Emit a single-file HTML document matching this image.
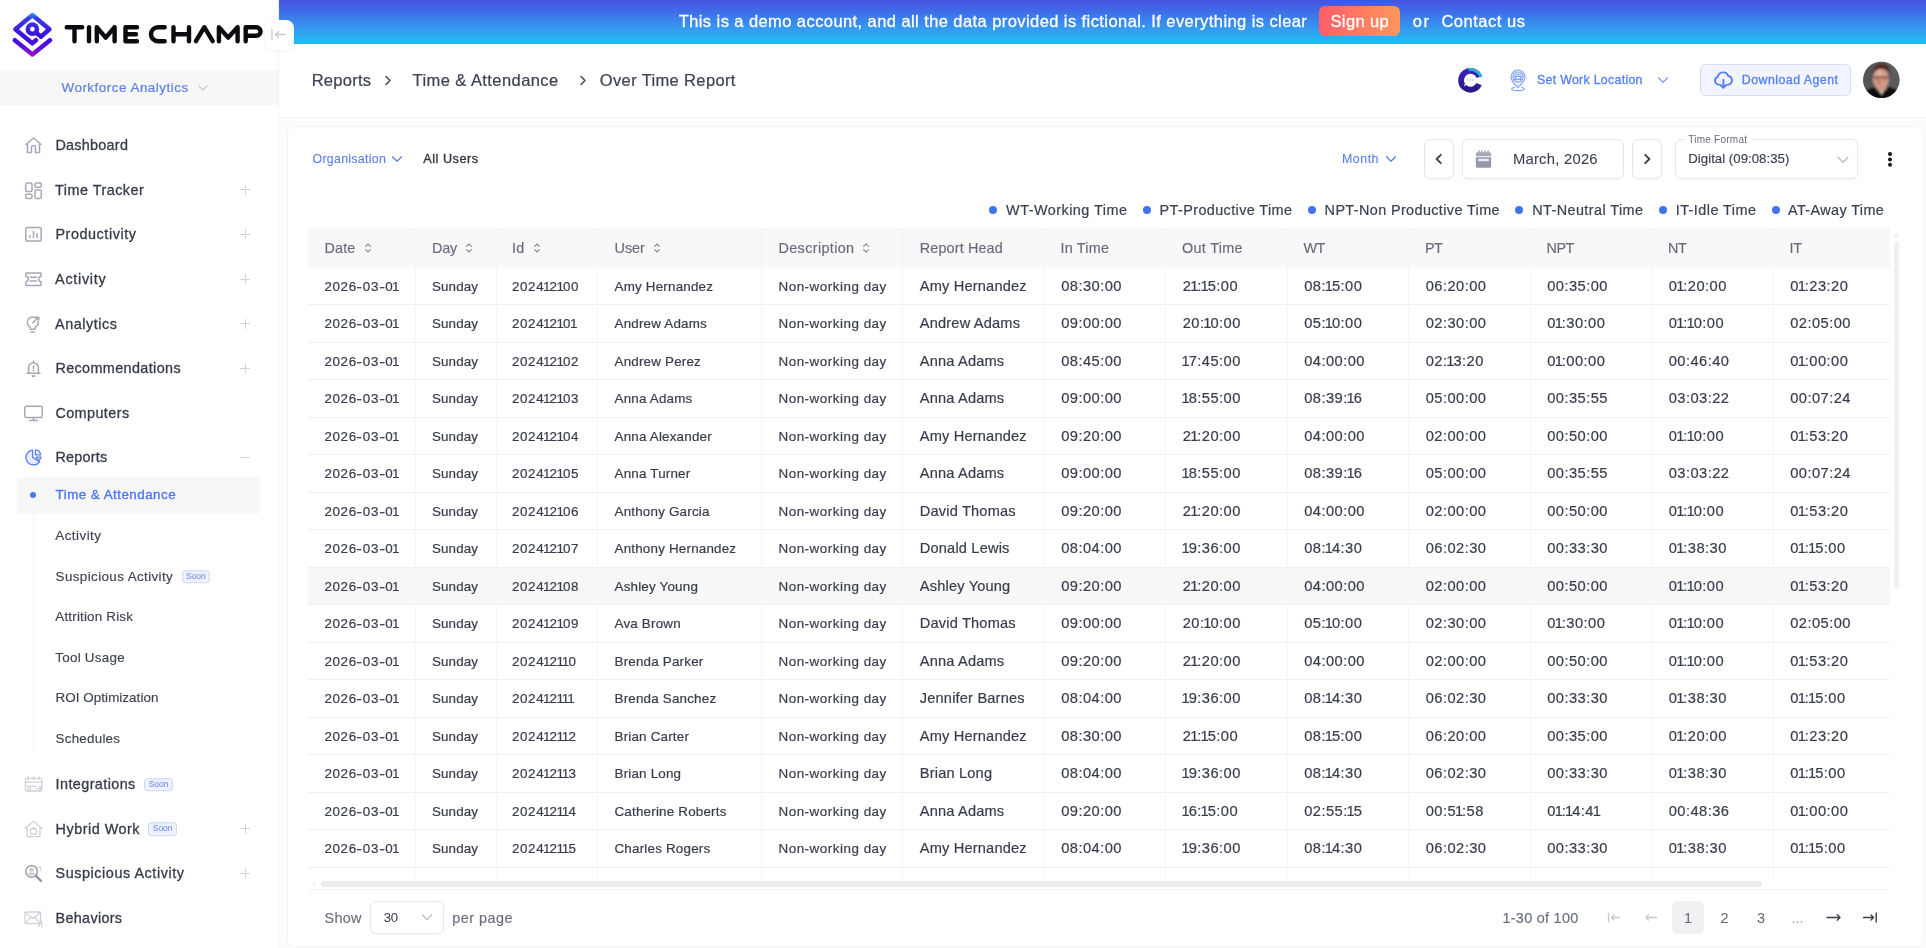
<!DOCTYPE html>
<html><head><meta charset="utf-8">
<style>
*{box-sizing:border-box;margin:0;padding:0}
html,body{width:1926px;height:948px;overflow:hidden;background:#fcfcfd;font-family:"Liberation Sans",sans-serif;color:#3a3f4b}
.abs{position:absolute}
.t{position:absolute;white-space:nowrap;line-height:1;transform:translateY(-50%)}
#side{position:absolute;left:0;top:0;width:279px;height:948px;background:#fff;border-right:1px solid #f3f3f5}
#wf{position:absolute;left:0;top:70px;width:278px;height:35px;background:#f7f7f8}
.mi{position:absolute;left:55px;font-size:15.5px;color:#33373f;white-space:nowrap;line-height:1;transform:translateY(-50%);letter-spacing:.1px;-webkit-text-stroke:.3px #33373f}
.si{position:absolute;left:55px;font-size:14px;color:#3d424d;white-space:nowrap;line-height:1;transform:translateY(-50%);letter-spacing:.15px}
.plus{position:absolute;left:240px;width:10px;height:10px}
.plus:before,.plus:after{content:"";position:absolute;background:#d2d4db}
.plus:before{left:0;top:4.5px;width:10px;height:1px}
.plus:after{left:4.5px;top:0;width:1px;height:10px}
.minus{position:absolute;left:240px;width:10px;height:1px;background:#d2d4db}
.soon{position:absolute;width:28.5px;height:13.5px;border:1px solid #cdd8f8;background:#eef2fe;border-radius:3.5px;color:#6b86e8;font-size:8.6px;line-height:11.5px;text-align:center;transform:translateY(-50%);letter-spacing:-.1px}
.ico{position:absolute;left:22px;width:22px;height:22px;transform:translateY(-50%)}
#banner{position:absolute;left:278.5px;top:0;width:1648px;height:44.5px;background:linear-gradient(180deg,#4653df 0%,#4066e6 20%,#3a84ec 45%,#359bf0 65%,#2babf2 80%,#22b9f5 92%,#20bef6 100%)}
#hdr{position:absolute;left:279px;top:44px;width:1647px;height:73.5px;background:#fff;border-bottom:1px solid #f4f4f6}
#card{position:absolute;left:286.5px;top:125.5px;width:1637.5px;height:821.5px;background:#fff;border:1px solid #f3f3f5;border-radius:7px}
#tbl{position:absolute;left:308px;top:228px;width:1582px;height:651px;overflow:hidden}
.thr{position:absolute;left:0;top:0;width:1582px;height:39.5px;background:#f8f8f9}
.th{position:absolute;top:0;height:39.5px;padding-left:16.5px;font-size:14.4px;color:#666b7a;line-height:40px;white-space:nowrap;-webkit-text-stroke:.15px #666b7a}
.th .srt{margin-left:8px;vertical-align:-1px}
.tr{position:absolute;left:0;width:1582px;height:37.5px;border-bottom:1px solid #f1f1f3}
.tr.hov{background:#f7f7f8}
.td{position:absolute;top:0;height:37.5px;padding-left:16.5px;color:#383d4d;line-height:37.5px;white-space:nowrap;-webkit-text-stroke:.2px #383d4d}
.c0,.c2{font-size:13.4px;letter-spacing:.6px}
.c1{font-size:13.4px;letter-spacing:.12px}
.c3{font-size:13.4px;letter-spacing:.2px}
.c4{font-size:13.4px;letter-spacing:.52px}
.c5{font-size:14.6px;letter-spacing:.18px}
.c6{font-size:14.7px;letter-spacing:.45px}
.td i{font-style:normal;margin:0 -1.5px 0 -1.2px}
.c1{padding-left:17.5px !important}
.c3,.c4{padding-left:17.5px !important}
.c5{padding-left:18.3px !important}
.c6{padding-left:17.7px !important}
.td b{font-weight:normal;display:inline-block;transform:scaleX(1.3);margin:0 .55px}
.vl{position:absolute;top:0;width:1px;height:651px;background:#f5f5f7}
.btn{position:absolute;border:1px solid #e7e7eb;border-radius:6px;background:#fff;box-shadow:0 1px 2px rgba(20,20,40,.035)}
.lg{position:absolute;top:210px;font-size:14.5px;color:#3a3f4b;white-space:nowrap;line-height:1;transform:translateY(-50%);letter-spacing:.2px}
.dot{position:absolute;top:206px;width:8px;height:8px;border-radius:50%;background:#3f73f0}
.pg{position:absolute;top:917.5px;font-size:14.4px;color:#5f6471;white-space:nowrap;line-height:1;transform:translate(-50%,-50%)}
</style></head><body><div id="root" style="position:absolute;left:0;top:0;width:1926px;height:948px;will-change:transform">

<!-- SIDEBAR -->
<div id="side">
  
  <!-- LOGO -->
  <svg class="abs" style="left:0;top:0" width="300" height="70" viewBox="0 0 300 70">
    <defs><linearGradient id="lg1" x1="0" y1="12" x2="0" y2="57" gradientUnits="userSpaceOnUse">
      <stop offset="0" stop-color="#35b4f5"/><stop offset=".14" stop-color="#3a3be8"/><stop offset=".55" stop-color="#3c0fdc"/><stop offset=".8" stop-color="#5a10d8"/><stop offset="1" stop-color="#b40fc8"/></linearGradient></defs>
    <g fill="none" stroke="url(#lg1)" stroke-width="4.5" stroke-linecap="round" stroke-linejoin="round">
      <path d="M41 36.6 49.4 29.2 32.4 15 15.4 29.2 32.3 43.3 36 40.2"/>
      <path d="M14.8 40.2 32.4 54.5 50 40.2"/>
      <circle cx="32.4" cy="29.2" r="4.6"/>
      <path d="M35.7 32.4 41 36.6"/>
    </g>
    <g fill="none" stroke="#0b0b0f" stroke-width="4.4" stroke-linecap="round" stroke-linejoin="round">
      <path d="M66.7 27.2H82.2M74.5 27.2V41.2"/>
      <path d="M89 27.2V41.2"/>
      <path d="M96.8 41.2V27.2L105.7 37.6 114.6 27.2V41.2"/>
      <path d="M137 27.2H125.5V41.2H137M125.5 34.2H136"/>
      <path d="M164.7 27.2H158A7 7 0 0 0 158 41.2H164.7"/>
      <path d="M173.5 27.2V41.2M189 27.2V41.2M173.5 34.2H189"/>
      <path d="M195.9 41.2 204.3 27.2 212.7 41.2"/>
      <path d="M218.9 41.2V27.2L228.2 37.6 237.6 27.2V41.2"/>
      <path d="M245.7 41.2V27.2H256.3A4.3 4.3 0 0 1 256.3 35.8H245.7"/>
    </g>
  </svg>
  <div id="wf"></div>
  <svg class="abs" style="left:197px;top:84px" width="12" height="8" viewBox="0 0 12 8"><path d="M2 2l4 4 4-4" fill="none" stroke="#c9ccd3" stroke-width="1.3" stroke-linecap="round" stroke-linejoin="round"/></svg>

  <svg class="ico" style="top:145px" width="22" height="22" viewBox="0 0 22 22" fill="none" stroke="#a5a8b5" stroke-width="1.5" stroke-linecap="round" stroke-linejoin="round"><path d="M4 10.5 11.5 4 19 10.5M5.5 9.5V18.5H9.5V13.5A2 2 0 0 1 13.5 13.5V18.5H17.5V9.5"/></svg>
  <svg class="ico" style="top:189.5px" width="22" height="22" viewBox="0 0 22 22" fill="none" stroke="#a5a8b5" stroke-width="1.5" stroke-linecap="round" stroke-linejoin="round"><rect x="3.7" y="4" width="6.3" height="8.6" rx="1.3"/><rect x="13" y="4" width="6.3" height="4.3" rx="1.3"/><rect x="3.7" y="15.3" width="6.3" height="4.1" rx="1.3"/><rect x="13" y="11" width="6.3" height="8.4" rx="1.3"/></svg>
  <svg class="ico" style="top:234px" width="22" height="22" viewBox="0 0 22 22" fill="none" stroke="#a5a8b5" stroke-width="1.5" stroke-linecap="round" stroke-linejoin="round"><rect x="3.8" y="4.4" width="15.4" height="13.6" rx="1.8"/><path d="M8 14.5V12.8M11.5 14.5V8.5M15 14.5V10.8"/></svg>
  <svg class="ico" style="top:279px" width="22" height="22" viewBox="0 0 22 22" fill="none" stroke="#a5a8b5" stroke-width="1.5" stroke-linecap="round" stroke-linejoin="round"><path d="M4 5H19V8.6A2.4 2.4 0 0 0 19 13.4V17.5H4V13.4A2.4 2.4 0 0 0 4 8.6Z"/><path d="M8.5 9.3H14.5M8.5 13H14.5" stroke-width="1.6"/></svg>
  <svg class="ico" style="top:323.5px" width="22" height="22" viewBox="0 0 22 22" fill="none" stroke="#a5a8b5" stroke-width="1.5" stroke-linecap="round" stroke-linejoin="round"><path d="M14.6 5.6A5.4 5.4 0 1 0 8.4 14.2V16.2H13.2V14.2A5.4 5.4 0 0 0 16.2 8.6"/><path d="M9 19H12.6M10.8 9.8 16.6 4.4M14 4.2H16.8V7"/></svg>
  <svg class="ico" style="top:368px" width="22" height="22" viewBox="0 0 22 22" fill="none" stroke="#a5a8b5" stroke-width="1.5" stroke-linecap="round" stroke-linejoin="round"><path d="M5 16.2H18M6.6 16.2V10.6A4.9 4.9 0 0 1 16.4 10.6V16.2M11.5 4V5.6M10.3 18.6A1.3 1.3 0 0 0 12.7 18.6"/><path d="M11.5 8.8V11.6M11.5 13.6V13.7" stroke-width="1.5"/></svg>
  <svg class="ico" style="top:412.5px" width="22" height="22" viewBox="0 0 22 22" fill="none" stroke="#a5a8b5" stroke-width="1.5" stroke-linecap="round" stroke-linejoin="round"><rect x="2.8" y="4.2" width="17.4" height="11.4" rx="1.6" stroke-width="1.5"/><path d="M11.5 15.6V18.4M7.5 18.6H15.5" stroke-width="1.5"/></svg>
  <svg class="ico" style="top:457px" width="22" height="22" viewBox="0 0 22 22" fill="none" stroke="#5b80ee" stroke-width="1.3" stroke-linecap="round" stroke-linejoin="round"><path d="M10.6 4.2A7.4 7.4 0 1 0 17.6 15.6L10.6 11.4Z" fill="#e6ecfd"/><path d="M13.4 3.8V8.8H18.6A5.4 5.4 0 0 0 13.4 3.8Z" fill="#e6ecfd"/><path d="M14.2 11.2H19.2L16.8 15Z" fill="#e6ecfd"/></svg>
  <svg class="ico" style="top:784px" width="22" height="22" viewBox="0 0 22 22" fill="none" stroke="#d0d2d9" stroke-width="1.3" stroke-linecap="round" stroke-linejoin="round"><rect x="3.4" y="5.4" width="16.4" height="12.6" rx="1.6"/><path d="M3.6 9.2H19.6M3.6 13.4H14M6.2 3.6V6.6M11.6 3.6V6.6M17 3.6V6.6M14.2 15.6H19.8M17.6 13.6 19.8 15.6 17.6 17.6M5.6 16.4A1.6 1.6 0 1 0 8.8 16.4 1.6 1.6 0 1 0 5.6 16.4"/></svg>
  <svg class="ico" style="top:828.5px" width="22" height="22" viewBox="0 0 22 22" fill="none" stroke="#d0d2d9" stroke-width="1.3" stroke-linecap="round" stroke-linejoin="round"><path d="M2.8 10.4 11.5 3.6 20.2 10.4M5 9.2V18.6H18V9.2"/><rect x="8.4" y="11" width="6.2" height="5" rx="1"/><path d="M10.2 11V9.8H12.8V11"/></svg>
  <svg class="ico" style="top:873px" width="22" height="22" viewBox="0 0 22 22" fill="none" stroke="#d0d2d9" stroke-width="1.3" stroke-linecap="round" stroke-linejoin="round"><circle cx="9.6" cy="9.4" r="5.8" stroke="#a6a8b4" stroke-width="1.7"/><circle cx="9.6" cy="7.8" r="1.7" fill="#c4c6cf"/><path d="M6.4 13A3.4 3.4 0 0 1 12.8 13" fill="#c4c6cf"/><path d="M14 13.8 19 19" stroke="#8f93a2" stroke-width="2.4"/><path d="M16 5.2H18.6V8"/></svg>
  <svg class="ico" style="top:917.5px" width="22" height="22" viewBox="0 0 22 22" fill="none" stroke="#d0d2d9" stroke-width="1.3" stroke-linecap="round" stroke-linejoin="round"><rect x="3" y="5" width="15.6" height="11.6" rx="1"/><path d="M3.2 5.4 10.8 11.6 18.4 5.4M3.4 16.2 8.6 10.6M18.2 16.2 13 10.6M17 17.2V19.6M19.6 14.6V19.6"/></svg><div class="plus" style="top:184.5px"></div><div class="plus" style="top:229px"></div><div class="plus" style="top:274px"></div><div class="plus" style="top:318.5px"></div><div class="plus" style="top:363px"></div><div class="minus" style="top:457px"></div>

  <div class="abs" style="left:17px;top:477px;width:243px;height:37px;background:#f7f7f8;border-radius:4px"></div>
  <div class="abs" style="left:33px;top:514px;width:1px;height:240px;background:#f3f3f5"></div>
  <div class="abs" style="left:30px;top:492px;width:6px;height:6px;border-radius:50%;background:#4d78ec"></div><div class="soon" style="left:181.5px;top:576.5px">Soon</div><div class="soon" style="left:144.3px;top:784.7px">Soon</div><div class="soon" style="left:148.4px;top:829.2px">Soon</div><div class="plus" style="top:823.5px"></div><div class="plus" style="top:868px"></div>
</div>

<!-- BANNER -->
<div id="banner"></div>
<div class="abs" style="left:1319px;top:6px;width:81px;height:30px;border-radius:6px;background:linear-gradient(90deg,#ff5d68,#fd975c)"></div>

<!-- HEADER -->
<div id="hdr"></div>
<div class="abs" style="left:1700px;top:64px;width:151px;height:32px;border:1px solid #d2defa;border-radius:5.5px;background:#f2f5ff"></div>


<!-- collapse tab -->
<div class="abs" style="left:265px;top:19.5px;width:28.5px;height:30px;background:#fff;border-radius:8px;box-shadow:0 1px 4px rgba(0,0,0,.05)"></div>
<svg class="abs" style="left:270px;top:28px" width="16" height="13" viewBox="0 0 16 13" fill="none" stroke="#c5c8d0" stroke-width="1.3" stroke-linecap="round" stroke-linejoin="round"><path d="M2 1.5V11.5M14.5 6.5H5.5M8.5 3.5 5.5 6.5 8.5 9.5"/></svg>

<!-- breadcrumb chevrons -->
<svg class="abs" style="left:383px;top:75px" width="10" height="11" viewBox="0 0 10 11" fill="none" stroke="#3a3f4b" stroke-width="1.4" stroke-linecap="round" stroke-linejoin="round"><path d="M3 1.5 7 5.5 3 9.5"/></svg>
<svg class="abs" style="left:578px;top:75px" width="10" height="11" viewBox="0 0 10 11" fill="none" stroke="#3a3f4b" stroke-width="1.4" stroke-linecap="round" stroke-linejoin="round"><path d="M3 1.5 7 5.5 3 9.5"/></svg>

<!-- chat icon -->
<svg class="abs" style="left:1456px;top:66px" width="29" height="29" viewBox="0 0 29 29">
  <defs><linearGradient id="cg" x1="0" y1="0" x2="0" y2="1"><stop offset="0" stop-color="#3b22bb"/><stop offset="1" stop-color="#2b1a88"/></linearGradient></defs>
  <path d="M23.09 18.12A9.4 9.4 0 1 1 23.33 11.09" fill="none" stroke="url(#cg)" stroke-width="5.8"/>
  <path d="M12.61 3.57A10.9 10.9 0 0 1 24.92 11.11" fill="none" stroke="#27b4cc" stroke-width="2.9"/>
  <path d="M8.4 14.1A5.9 4.9 0 1 1 11.2 18.3L7.8 20.6 9.2 16.9A4.9 4.9 0 0 1 8.4 14.1Z" fill="#fff"/>
  <circle cx="11.9" cy="14" r=".75" fill="#7ccbe0"/><circle cx="14.3" cy="14" r=".75" fill="#7ccbe0"/><circle cx="16.7" cy="14" r=".75" fill="#7ccbe0"/>
</svg>

<!-- location pin -->
<svg class="abs" style="left:1508px;top:68px" width="20" height="24" viewBox="0 0 20 24" fill="none" stroke="#7f9ef5" stroke-width="1.1" stroke-linecap="round" stroke-linejoin="round">
  <path d="M10 19.6C5.4 15.4 3 12.2 3 9A7 7 0 0 1 17 9C17 12.2 14.6 15.4 10 19.6Z" fill="#eaf0fe"/>
  <circle cx="10" cy="9" r="5"/>
  <path d="M6.6 8.4H13.4M6.6 11.4H13.4M8 6.2H12M7.4 8.4V11.4M12.6 8.4V11.4"/>
  <path d="M6.4 19.4C4.6 19.8 3.6 20.4 3.6 21 3.6 22 6.4 22.6 10 22.6S16.4 22 16.4 21C16.4 20.4 15.4 19.8 13.6 19.4"/>
</svg>
<svg class="abs" style="left:1657px;top:76px" width="12" height="8" viewBox="0 0 12 8" fill="none" stroke="#7f9ef5" stroke-width="1.3" stroke-linecap="round" stroke-linejoin="round"><path d="M1.5 1.8 6 6.2 10.5 1.8"/></svg>

<!-- cloud download -->
<svg class="abs" style="left:1713px;top:70px" width="21" height="20" viewBox="0 0 21 20" fill="none" stroke="#5580ee" stroke-width="1.9" stroke-linecap="round" stroke-linejoin="round">
  <path d="M6.2 14.6H5.6A4 4 0 0 1 4.8 6.8 5.4 5.4 0 0 1 15.2 6 4.4 4.4 0 0 1 15.6 14.6H14.6"/>
  <path d="M10.4 9.6V17.6M7.6 15 10.4 17.8 13.2 15"/>
</svg>

<!-- avatar -->
<svg class="abs" style="left:1861px;top:60px" width="41" height="41" viewBox="0 0 41 41">
  <defs><clipPath id="avc"><circle cx="20.4" cy="19.9" r="18.2"/></clipPath>
  <filter id="avb" x="-20%" y="-20%" width="140%" height="140%"><feGaussianBlur stdDeviation=".8"/></filter></defs>
  <g clip-path="url(#avc)">
    <rect width="41" height="41" fill="#5c5b5e"/>
    <g filter="url(#avb)">
      <rect x="0" y="0" width="12" height="41" fill="#545356"/>
      <path d="M2 41V33C6 29 11 27.6 14 27H27C31 27.6 36 29.5 39 33V41Z" fill="#0e0e10"/>
      <path d="M15.5 27.5 20.5 35 25.5 27.5Z" fill="#c9b4b2"/>
      <rect x="15.5" y="22" width="10" height="8" fill="#b98872"/>
      <ellipse cx="20" cy="19.2" rx="8.1" ry="10.8" fill="#cf9a85"/>
      <ellipse cx="18.2" cy="13" rx="3.5" ry="3" fill="#e0ab98"/>
      <ellipse cx="17.8" cy="22.5" rx="2" ry="2.2" fill="#cf7f78"/>
      <path d="M12 14C11.6 7 15 4 20.5 4S29 7 28.4 14C27 10 24 9 20.2 9S13.5 10 12 14Z" fill="#53291f"/>
      <path d="M12.6 17.2H27.8" stroke="#7d4637" stroke-width="1.3"/>
      <path d="M13 18.8H19M21.6 18.8H27.4" stroke="#a8705e" stroke-width="1.4"/>
    </g>
  </g>
</svg>


<!-- CARD -->
<div id="card"></div>

<div class="btn" style="left:1424px;top:139px;width:30px;height:40px"></div>
<div class="btn" style="left:1462px;top:139px;width:162px;height:40px"></div>
<div class="btn" style="left:1632px;top:139px;width:30px;height:40px"></div>
<div class="btn" style="left:1675px;top:139px;width:183px;height:40px"></div>
<div class="abs" style="left:1684px;top:134px;width:68px;height:10px;background:#fff"></div>

<!-- filter chevrons -->
<svg class="abs" style="left:391px;top:155px" width="12" height="8" viewBox="0 0 12 8" fill="none" stroke="#5b7fe8" stroke-width="1.3" stroke-linecap="round" stroke-linejoin="round"><path d="M1.5 1.8 6 6.2 10.5 1.8"/></svg>
<svg class="abs" style="left:1385px;top:155px" width="12" height="8" viewBox="0 0 12 8" fill="none" stroke="#5b7fe8" stroke-width="1.3" stroke-linecap="round" stroke-linejoin="round"><path d="M1.5 1.8 6 6.2 10.5 1.8"/></svg>

<!-- legend -->
<div class="dot" style="left:989px"></div>
<div class="dot" style="left:1143px"></div>
<div class="dot" style="left:1308px"></div>
<div class="dot" style="left:1515px"></div>
<div class="dot" style="left:1659px"></div>
<div class="dot" style="left:1772px"></div>

<!-- TABLE -->
<div id="tbl">
<div class="thr"></div>
<div class="th" style="left:0px;width:106.5px"><span style="letter-spacing:0.15px">Date</span><svg class="srt" width="8" height="12" viewBox="0 0 8 12"><path d="M1.6 4.4 4 2l2.4 2.4M1.6 7.6 4 10l2.4-2.4" fill="none" stroke="#8a8f9c" stroke-width="1.2" stroke-linecap="round" stroke-linejoin="round"/></svg></div>
<div class="th" style="left:106.5px;width:81.0px;padding-left:17.5px"><span style="letter-spacing:-0.16px">Day</span><svg class="srt" width="8" height="12" viewBox="0 0 8 12"><path d="M1.6 4.4 4 2l2.4 2.4M1.6 7.6 4 10l2.4-2.4" fill="none" stroke="#8a8f9c" stroke-width="1.2" stroke-linecap="round" stroke-linejoin="round"/></svg></div>
<div class="th" style="left:187.5px;width:101.5px"><span style="letter-spacing:0.3px">Id</span><svg class="srt" width="8" height="12" viewBox="0 0 8 12"><path d="M1.6 4.4 4 2l2.4 2.4M1.6 7.6 4 10l2.4-2.4" fill="none" stroke="#8a8f9c" stroke-width="1.2" stroke-linecap="round" stroke-linejoin="round"/></svg></div>
<div class="th" style="left:289px;width:164px;padding-left:17.5px"><span style="letter-spacing:0px">User</span><svg class="srt" width="8" height="12" viewBox="0 0 8 12"><path d="M1.6 4.4 4 2l2.4 2.4M1.6 7.6 4 10l2.4-2.4" fill="none" stroke="#8a8f9c" stroke-width="1.2" stroke-linecap="round" stroke-linejoin="round"/></svg></div>
<div class="th" style="left:453px;width:140.5px;padding-left:17.5px"><span style="letter-spacing:0.36px">Description</span><svg class="srt" width="8" height="12" viewBox="0 0 8 12"><path d="M1.6 4.4 4 2l2.4 2.4M1.6 7.6 4 10l2.4-2.4" fill="none" stroke="#8a8f9c" stroke-width="1.2" stroke-linecap="round" stroke-linejoin="round"/></svg></div>
<div class="th" style="left:593.5px;width:142.0px;padding-left:18.3px"><span style="letter-spacing:0.13px">Report Head</span></div>
<div class="th" style="left:735.5px;width:121.5px;padding-left:17px"><span style="letter-spacing:0.2px">In Time</span></div>
<div class="th" style="left:857px;width:121.5px;padding-left:17px"><span style="letter-spacing:0.3px">Out Time</span></div>
<div class="th" style="left:978.5px;width:121.5px;padding-left:17px"><span style="letter-spacing:-0.6px">WT</span></div>
<div class="th" style="left:1100px;width:121.5px;padding-left:17px"><span style="letter-spacing:-0.6px">PT</span></div>
<div class="th" style="left:1221.5px;width:121.5px;padding-left:17px"><span style="letter-spacing:-0.5px">NPT</span></div>
<div class="th" style="left:1343px;width:121.5px;padding-left:17px"><span style="letter-spacing:-0.5px">NT</span></div>
<div class="th" style="left:1464.5px;width:117.5px;padding-left:17px"><span style="letter-spacing:-0.3px">IT</span></div>
<div class="tr" style="top:39.5px"><div class="td c0" style="left:0px;width:106.5px">2026<b>-</b>03<b>-</b>0<i>1</i></div><div class="td c1" style="left:106.5px;width:81.0px">Sunday</div><div class="td c2" style="left:187.5px;width:101.5px">2024<i>1</i>2<i>1</i>00</div><div class="td c3" style="left:289px;width:164px">Amy Hernandez</div><div class="td c4" style="left:453px;width:140.5px">Non-working day</div><div class="td c5" style="left:593.5px;width:142.0px">Amy Hernandez</div><div class="td c6" style="left:735.5px;width:121.5px">08:30:00</div><div class="td c6" style="left:857px;width:121.5px">2<i>1</i>:<i>1</i>5:00</div><div class="td c6" style="left:978.5px;width:121.5px">08:<i>1</i>5:00</div><div class="td c6" style="left:1100px;width:121.5px">06:20:00</div><div class="td c6" style="left:1221.5px;width:121.5px">00:35:00</div><div class="td c6" style="left:1343px;width:121.5px">0<i>1</i>:20:00</div><div class="td c6" style="left:1464.5px;width:117.5px">0<i>1</i>:23:20</div></div>
<div class="tr" style="top:77.0px"><div class="td c0" style="left:0px;width:106.5px">2026<b>-</b>03<b>-</b>0<i>1</i></div><div class="td c1" style="left:106.5px;width:81.0px">Sunday</div><div class="td c2" style="left:187.5px;width:101.5px">2024<i>1</i>2<i>1</i>0<i>1</i></div><div class="td c3" style="left:289px;width:164px">Andrew Adams</div><div class="td c4" style="left:453px;width:140.5px">Non-working day</div><div class="td c5" style="left:593.5px;width:142.0px">Andrew Adams</div><div class="td c6" style="left:735.5px;width:121.5px">09:00:00</div><div class="td c6" style="left:857px;width:121.5px">20:<i>1</i>0:00</div><div class="td c6" style="left:978.5px;width:121.5px">05:<i>1</i>0:00</div><div class="td c6" style="left:1100px;width:121.5px">02:30:00</div><div class="td c6" style="left:1221.5px;width:121.5px">0<i>1</i>:30:00</div><div class="td c6" style="left:1343px;width:121.5px">0<i>1</i>:<i>1</i>0:00</div><div class="td c6" style="left:1464.5px;width:117.5px">02:05:00</div></div>
<div class="tr" style="top:114.5px"><div class="td c0" style="left:0px;width:106.5px">2026<b>-</b>03<b>-</b>0<i>1</i></div><div class="td c1" style="left:106.5px;width:81.0px">Sunday</div><div class="td c2" style="left:187.5px;width:101.5px">2024<i>1</i>2<i>1</i>02</div><div class="td c3" style="left:289px;width:164px">Andrew Perez</div><div class="td c4" style="left:453px;width:140.5px">Non-working day</div><div class="td c5" style="left:593.5px;width:142.0px">Anna Adams</div><div class="td c6" style="left:735.5px;width:121.5px">08:45:00</div><div class="td c6" style="left:857px;width:121.5px"><i>1</i>7:45:00</div><div class="td c6" style="left:978.5px;width:121.5px">04:00:00</div><div class="td c6" style="left:1100px;width:121.5px">02:<i>1</i>3:20</div><div class="td c6" style="left:1221.5px;width:121.5px">0<i>1</i>:00:00</div><div class="td c6" style="left:1343px;width:121.5px">00:46:40</div><div class="td c6" style="left:1464.5px;width:117.5px">0<i>1</i>:00:00</div></div>
<div class="tr" style="top:152.0px"><div class="td c0" style="left:0px;width:106.5px">2026<b>-</b>03<b>-</b>0<i>1</i></div><div class="td c1" style="left:106.5px;width:81.0px">Sunday</div><div class="td c2" style="left:187.5px;width:101.5px">2024<i>1</i>2<i>1</i>03</div><div class="td c3" style="left:289px;width:164px">Anna Adams</div><div class="td c4" style="left:453px;width:140.5px">Non-working day</div><div class="td c5" style="left:593.5px;width:142.0px">Anna Adams</div><div class="td c6" style="left:735.5px;width:121.5px">09:00:00</div><div class="td c6" style="left:857px;width:121.5px"><i>1</i>8:55:00</div><div class="td c6" style="left:978.5px;width:121.5px">08:39:<i>1</i>6</div><div class="td c6" style="left:1100px;width:121.5px">05:00:00</div><div class="td c6" style="left:1221.5px;width:121.5px">00:35:55</div><div class="td c6" style="left:1343px;width:121.5px">03:03:22</div><div class="td c6" style="left:1464.5px;width:117.5px">00:07:24</div></div>
<div class="tr" style="top:189.5px"><div class="td c0" style="left:0px;width:106.5px">2026<b>-</b>03<b>-</b>0<i>1</i></div><div class="td c1" style="left:106.5px;width:81.0px">Sunday</div><div class="td c2" style="left:187.5px;width:101.5px">2024<i>1</i>2<i>1</i>04</div><div class="td c3" style="left:289px;width:164px">Anna Alexander</div><div class="td c4" style="left:453px;width:140.5px">Non-working day</div><div class="td c5" style="left:593.5px;width:142.0px">Amy Hernandez</div><div class="td c6" style="left:735.5px;width:121.5px">09:20:00</div><div class="td c6" style="left:857px;width:121.5px">2<i>1</i>:20:00</div><div class="td c6" style="left:978.5px;width:121.5px">04:00:00</div><div class="td c6" style="left:1100px;width:121.5px">02:00:00</div><div class="td c6" style="left:1221.5px;width:121.5px">00:50:00</div><div class="td c6" style="left:1343px;width:121.5px">0<i>1</i>:<i>1</i>0:00</div><div class="td c6" style="left:1464.5px;width:117.5px">0<i>1</i>:53:20</div></div>
<div class="tr" style="top:227.0px"><div class="td c0" style="left:0px;width:106.5px">2026<b>-</b>03<b>-</b>0<i>1</i></div><div class="td c1" style="left:106.5px;width:81.0px">Sunday</div><div class="td c2" style="left:187.5px;width:101.5px">2024<i>1</i>2<i>1</i>05</div><div class="td c3" style="left:289px;width:164px">Anna Turner</div><div class="td c4" style="left:453px;width:140.5px">Non-working day</div><div class="td c5" style="left:593.5px;width:142.0px">Anna Adams</div><div class="td c6" style="left:735.5px;width:121.5px">09:00:00</div><div class="td c6" style="left:857px;width:121.5px"><i>1</i>8:55:00</div><div class="td c6" style="left:978.5px;width:121.5px">08:39:<i>1</i>6</div><div class="td c6" style="left:1100px;width:121.5px">05:00:00</div><div class="td c6" style="left:1221.5px;width:121.5px">00:35:55</div><div class="td c6" style="left:1343px;width:121.5px">03:03:22</div><div class="td c6" style="left:1464.5px;width:117.5px">00:07:24</div></div>
<div class="tr" style="top:264.5px"><div class="td c0" style="left:0px;width:106.5px">2026<b>-</b>03<b>-</b>0<i>1</i></div><div class="td c1" style="left:106.5px;width:81.0px">Sunday</div><div class="td c2" style="left:187.5px;width:101.5px">2024<i>1</i>2<i>1</i>06</div><div class="td c3" style="left:289px;width:164px">Anthony Garcia</div><div class="td c4" style="left:453px;width:140.5px">Non-working day</div><div class="td c5" style="left:593.5px;width:142.0px">David Thomas</div><div class="td c6" style="left:735.5px;width:121.5px">09:20:00</div><div class="td c6" style="left:857px;width:121.5px">2<i>1</i>:20:00</div><div class="td c6" style="left:978.5px;width:121.5px">04:00:00</div><div class="td c6" style="left:1100px;width:121.5px">02:00:00</div><div class="td c6" style="left:1221.5px;width:121.5px">00:50:00</div><div class="td c6" style="left:1343px;width:121.5px">0<i>1</i>:<i>1</i>0:00</div><div class="td c6" style="left:1464.5px;width:117.5px">0<i>1</i>:53:20</div></div>
<div class="tr" style="top:302.0px"><div class="td c0" style="left:0px;width:106.5px">2026<b>-</b>03<b>-</b>0<i>1</i></div><div class="td c1" style="left:106.5px;width:81.0px">Sunday</div><div class="td c2" style="left:187.5px;width:101.5px">2024<i>1</i>2<i>1</i>07</div><div class="td c3" style="left:289px;width:164px">Anthony Hernandez</div><div class="td c4" style="left:453px;width:140.5px">Non-working day</div><div class="td c5" style="left:593.5px;width:142.0px">Donald Lewis</div><div class="td c6" style="left:735.5px;width:121.5px">08:04:00</div><div class="td c6" style="left:857px;width:121.5px"><i>1</i>9:36:00</div><div class="td c6" style="left:978.5px;width:121.5px">08:<i>1</i>4:30</div><div class="td c6" style="left:1100px;width:121.5px">06:02:30</div><div class="td c6" style="left:1221.5px;width:121.5px">00:33:30</div><div class="td c6" style="left:1343px;width:121.5px">0<i>1</i>:38:30</div><div class="td c6" style="left:1464.5px;width:117.5px">0<i>1</i>:<i>1</i>5:00</div></div>
<div class="tr hov" style="top:339.5px"><div class="td c0" style="left:0px;width:106.5px">2026<b>-</b>03<b>-</b>0<i>1</i></div><div class="td c1" style="left:106.5px;width:81.0px">Sunday</div><div class="td c2" style="left:187.5px;width:101.5px">2024<i>1</i>2<i>1</i>08</div><div class="td c3" style="left:289px;width:164px">Ashley Young</div><div class="td c4" style="left:453px;width:140.5px">Non-working day</div><div class="td c5" style="left:593.5px;width:142.0px">Ashley Young</div><div class="td c6" style="left:735.5px;width:121.5px">09:20:00</div><div class="td c6" style="left:857px;width:121.5px">2<i>1</i>:20:00</div><div class="td c6" style="left:978.5px;width:121.5px">04:00:00</div><div class="td c6" style="left:1100px;width:121.5px">02:00:00</div><div class="td c6" style="left:1221.5px;width:121.5px">00:50:00</div><div class="td c6" style="left:1343px;width:121.5px">0<i>1</i>:<i>1</i>0:00</div><div class="td c6" style="left:1464.5px;width:117.5px">0<i>1</i>:53:20</div></div>
<div class="tr" style="top:377.0px"><div class="td c0" style="left:0px;width:106.5px">2026<b>-</b>03<b>-</b>0<i>1</i></div><div class="td c1" style="left:106.5px;width:81.0px">Sunday</div><div class="td c2" style="left:187.5px;width:101.5px">2024<i>1</i>2<i>1</i>09</div><div class="td c3" style="left:289px;width:164px">Ava Brown</div><div class="td c4" style="left:453px;width:140.5px">Non-working day</div><div class="td c5" style="left:593.5px;width:142.0px">David Thomas</div><div class="td c6" style="left:735.5px;width:121.5px">09:00:00</div><div class="td c6" style="left:857px;width:121.5px">20:<i>1</i>0:00</div><div class="td c6" style="left:978.5px;width:121.5px">05:<i>1</i>0:00</div><div class="td c6" style="left:1100px;width:121.5px">02:30:00</div><div class="td c6" style="left:1221.5px;width:121.5px">0<i>1</i>:30:00</div><div class="td c6" style="left:1343px;width:121.5px">0<i>1</i>:<i>1</i>0:00</div><div class="td c6" style="left:1464.5px;width:117.5px">02:05:00</div></div>
<div class="tr" style="top:414.5px"><div class="td c0" style="left:0px;width:106.5px">2026<b>-</b>03<b>-</b>0<i>1</i></div><div class="td c1" style="left:106.5px;width:81.0px">Sunday</div><div class="td c2" style="left:187.5px;width:101.5px">2024<i>1</i>2<i>1</i><i>1</i>0</div><div class="td c3" style="left:289px;width:164px">Brenda Parker</div><div class="td c4" style="left:453px;width:140.5px">Non-working day</div><div class="td c5" style="left:593.5px;width:142.0px">Anna Adams</div><div class="td c6" style="left:735.5px;width:121.5px">09:20:00</div><div class="td c6" style="left:857px;width:121.5px">2<i>1</i>:20:00</div><div class="td c6" style="left:978.5px;width:121.5px">04:00:00</div><div class="td c6" style="left:1100px;width:121.5px">02:00:00</div><div class="td c6" style="left:1221.5px;width:121.5px">00:50:00</div><div class="td c6" style="left:1343px;width:121.5px">0<i>1</i>:<i>1</i>0:00</div><div class="td c6" style="left:1464.5px;width:117.5px">0<i>1</i>:53:20</div></div>
<div class="tr" style="top:452.0px"><div class="td c0" style="left:0px;width:106.5px">2026<b>-</b>03<b>-</b>0<i>1</i></div><div class="td c1" style="left:106.5px;width:81.0px">Sunday</div><div class="td c2" style="left:187.5px;width:101.5px">2024<i>1</i>2<i>1</i><i>1</i><i>1</i></div><div class="td c3" style="left:289px;width:164px">Brenda Sanchez</div><div class="td c4" style="left:453px;width:140.5px">Non-working day</div><div class="td c5" style="left:593.5px;width:142.0px">Jennifer Barnes</div><div class="td c6" style="left:735.5px;width:121.5px">08:04:00</div><div class="td c6" style="left:857px;width:121.5px"><i>1</i>9:36:00</div><div class="td c6" style="left:978.5px;width:121.5px">08:<i>1</i>4:30</div><div class="td c6" style="left:1100px;width:121.5px">06:02:30</div><div class="td c6" style="left:1221.5px;width:121.5px">00:33:30</div><div class="td c6" style="left:1343px;width:121.5px">0<i>1</i>:38:30</div><div class="td c6" style="left:1464.5px;width:117.5px">0<i>1</i>:<i>1</i>5:00</div></div>
<div class="tr" style="top:489.5px"><div class="td c0" style="left:0px;width:106.5px">2026<b>-</b>03<b>-</b>0<i>1</i></div><div class="td c1" style="left:106.5px;width:81.0px">Sunday</div><div class="td c2" style="left:187.5px;width:101.5px">2024<i>1</i>2<i>1</i><i>1</i>2</div><div class="td c3" style="left:289px;width:164px">Brian Carter</div><div class="td c4" style="left:453px;width:140.5px">Non-working day</div><div class="td c5" style="left:593.5px;width:142.0px">Amy Hernandez</div><div class="td c6" style="left:735.5px;width:121.5px">08:30:00</div><div class="td c6" style="left:857px;width:121.5px">2<i>1</i>:<i>1</i>5:00</div><div class="td c6" style="left:978.5px;width:121.5px">08:<i>1</i>5:00</div><div class="td c6" style="left:1100px;width:121.5px">06:20:00</div><div class="td c6" style="left:1221.5px;width:121.5px">00:35:00</div><div class="td c6" style="left:1343px;width:121.5px">0<i>1</i>:20:00</div><div class="td c6" style="left:1464.5px;width:117.5px">0<i>1</i>:23:20</div></div>
<div class="tr" style="top:527.0px"><div class="td c0" style="left:0px;width:106.5px">2026<b>-</b>03<b>-</b>0<i>1</i></div><div class="td c1" style="left:106.5px;width:81.0px">Sunday</div><div class="td c2" style="left:187.5px;width:101.5px">2024<i>1</i>2<i>1</i><i>1</i>3</div><div class="td c3" style="left:289px;width:164px">Brian Long</div><div class="td c4" style="left:453px;width:140.5px">Non-working day</div><div class="td c5" style="left:593.5px;width:142.0px">Brian Long</div><div class="td c6" style="left:735.5px;width:121.5px">08:04:00</div><div class="td c6" style="left:857px;width:121.5px"><i>1</i>9:36:00</div><div class="td c6" style="left:978.5px;width:121.5px">08:<i>1</i>4:30</div><div class="td c6" style="left:1100px;width:121.5px">06:02:30</div><div class="td c6" style="left:1221.5px;width:121.5px">00:33:30</div><div class="td c6" style="left:1343px;width:121.5px">0<i>1</i>:38:30</div><div class="td c6" style="left:1464.5px;width:117.5px">0<i>1</i>:<i>1</i>5:00</div></div>
<div class="tr" style="top:564.5px"><div class="td c0" style="left:0px;width:106.5px">2026<b>-</b>03<b>-</b>0<i>1</i></div><div class="td c1" style="left:106.5px;width:81.0px">Sunday</div><div class="td c2" style="left:187.5px;width:101.5px">2024<i>1</i>2<i>1</i><i>1</i>4</div><div class="td c3" style="left:289px;width:164px">Catherine Roberts</div><div class="td c4" style="left:453px;width:140.5px">Non-working day</div><div class="td c5" style="left:593.5px;width:142.0px">Anna Adams</div><div class="td c6" style="left:735.5px;width:121.5px">09:20:00</div><div class="td c6" style="left:857px;width:121.5px"><i>1</i>6:<i>1</i>5:00</div><div class="td c6" style="left:978.5px;width:121.5px">02:55:<i>1</i>5</div><div class="td c6" style="left:1100px;width:121.5px">00:5<i>1</i>:58</div><div class="td c6" style="left:1221.5px;width:121.5px">0<i>1</i>:<i>1</i>4:4<i>1</i></div><div class="td c6" style="left:1343px;width:121.5px">00:48:36</div><div class="td c6" style="left:1464.5px;width:117.5px">0<i>1</i>:00:00</div></div>
<div class="tr" style="top:602.0px"><div class="td c0" style="left:0px;width:106.5px">2026<b>-</b>03<b>-</b>0<i>1</i></div><div class="td c1" style="left:106.5px;width:81.0px">Sunday</div><div class="td c2" style="left:187.5px;width:101.5px">2024<i>1</i>2<i>1</i><i>1</i>5</div><div class="td c3" style="left:289px;width:164px">Charles Rogers</div><div class="td c4" style="left:453px;width:140.5px">Non-working day</div><div class="td c5" style="left:593.5px;width:142.0px">Amy Hernandez</div><div class="td c6" style="left:735.5px;width:121.5px">08:04:00</div><div class="td c6" style="left:857px;width:121.5px"><i>1</i>9:36:00</div><div class="td c6" style="left:978.5px;width:121.5px">08:<i>1</i>4:30</div><div class="td c6" style="left:1100px;width:121.5px">06:02:30</div><div class="td c6" style="left:1221.5px;width:121.5px">00:33:30</div><div class="td c6" style="left:1343px;width:121.5px">0<i>1</i>:38:30</div><div class="td c6" style="left:1464.5px;width:117.5px">0<i>1</i>:<i>1</i>5:00</div></div>
<div class="vl" style="left:106.5px"></div><div class="vl" style="left:187.5px"></div><div class="vl" style="left:289px"></div><div class="vl" style="left:453px"></div><div class="vl" style="left:593.5px"></div><div class="vl" style="left:735.5px"></div><div class="vl" style="left:857px"></div><div class="vl" style="left:978.5px"></div><div class="vl" style="left:1100px"></div><div class="vl" style="left:1221.5px"></div><div class="vl" style="left:1343px"></div><div class="vl" style="left:1464.5px"></div>
</div>

<!-- FOOTER -->
<div class="btn" style="left:370px;top:901px;width:74px;height:33px"></div>
<div class="abs" style="left:1672px;top:901px;width:32px;height:33px;border-radius:5px;background:#f1f1f3"></div>
<div class="pg" style="left:1688px">1</div>
<div class="pg" style="left:1724.5px">2</div>
<div class="pg" style="left:1761px">3</div>
<div class="pg" style="left:1797.5px;color:#9a9eaa">...</div>


<!-- date nav icons -->
<svg class="abs" style="left:1433px;top:153px" width="12" height="12" viewBox="0 0 12 12" fill="none" stroke="#3a3f4b" stroke-width="1.8" stroke-linecap="round" stroke-linejoin="round"><path d="M7.8 1.8 3.6 6 7.8 10.2"/></svg>
<svg class="abs" style="left:1641px;top:153px" width="12" height="12" viewBox="0 0 12 12" fill="none" stroke="#3a3f4b" stroke-width="1.8" stroke-linecap="round" stroke-linejoin="round"><path d="M4.2 1.8 8.4 6 4.2 10.2"/></svg>
<svg class="abs" style="left:1472.8px;top:148.8px" width="21" height="21" viewBox="0 0 19 19">
  <path d="M2.6 4.4A1.4 1.4 0 0 1 4 3H15A1.4 1.4 0 0 1 16.4 4.4V6.6H2.6Z" fill="#a4a6b6"/>
  <path d="M2.6 7.4H16.4V15.6A1.4 1.4 0 0 1 15 17H4A1.4 1.4 0 0 1 2.6 15.6Z" fill="#9698aa"/>
  <rect x="4.6" y="8.8" width="9.8" height="2.2" rx=".5" fill="#e8e8ee"/>
  <path d="M5.4 1.8V3.6M8.1 1.8V3.6M10.9 1.8V3.6M13.6 1.8V3.6" stroke="#a4a6b6" stroke-width="1.4" stroke-linecap="round"/>
</svg>
<svg class="abs" style="left:1834.5px;top:154.5px" width="16" height="10" viewBox="0 0 16 10" fill="none" stroke="#b9bcc6" stroke-width="1.3" stroke-linecap="round" stroke-linejoin="round"><path d="M3.2 2.2 8 7.2 12.8 2.2"/></svg>
<!-- kebab -->
<div class="abs" style="left:1888.3px;top:152.1px;width:4.2px;height:4.2px;border-radius:50%;background:#15161a;box-shadow:0 5.4px 0 #15161a,0 10.8px 0 #15161a"></div>

<!-- scrollbars -->
<div class="abs" style="left:1893.8px;top:241px;width:5px;height:347px;border-radius:3px;background:#f1f1f4"></div>
<svg class="abs" style="left:1891.8px;top:230px" width="9" height="8" viewBox="0 0 9 8"><path d="M1 7 4.5 2 8 7Z" fill="#f2f2f4"/></svg>
<div class="abs" style="left:308px;top:889px;width:1582px;height:1px;background:#f3f3f5"></div>
<div class="abs" style="left:321px;top:881px;width:1441px;height:6px;border-radius:3px;background:#ececef"></div>

<svg class="abs" style="left:310px;top:880.5px" width="7" height="7" viewBox="0 0 7 7"><path d="M5 1 2 3.5 5 6Z" fill="#ececef"/></svg>
<!-- footer chevron -->
<svg class="abs" style="left:420px;top:913px" width="14" height="9" viewBox="0 0 14 9" fill="none" stroke="#b9bcc6" stroke-width="1.3" stroke-linecap="round" stroke-linejoin="round"><path d="M2.5 2 7 6.6 11.5 2"/></svg>

<!-- pagination arrows -->
<svg class="abs" style="left:1606px;top:911px" width="16" height="13" viewBox="0 0 16 13" fill="none" stroke="#c5c8d0" stroke-width="1.3" stroke-linecap="round" stroke-linejoin="round"><path d="M2.5 2V11M13.5 6.5H5.5M8 4 5.5 6.5 8 9"/></svg>
<svg class="abs" style="left:1643px;top:911px" width="16" height="13" viewBox="0 0 16 13" fill="none" stroke="#c5c8d0" stroke-width="1.3" stroke-linecap="round" stroke-linejoin="round"><path d="M13.5 6.5H3M5.5 4 3 6.5 5.5 9"/></svg>
<svg class="abs" style="left:1825px;top:911px" width="17" height="13" viewBox="0 0 17 13" fill="none" stroke="#3a3f4b" stroke-width="1.4" stroke-linecap="round" stroke-linejoin="round"><path d="M2 6.5H15M12.2 3.8 15 6.5 12.2 9.2"/></svg>
<svg class="abs" style="left:1862px;top:911px" width="17" height="13" viewBox="0 0 17 13" fill="none" stroke="#3a3f4b" stroke-width="1.4" stroke-linecap="round" stroke-linejoin="round"><path d="M1.5 6.5H11.5M9 4 11.5 6.5 9 9M14.2 2V11"/></svg>


<!-- TEXTS -->
<div class="t" style="left:61.5px;top:87.5px;font-size:13.4px;color:#5b7fe8;letter-spacing:0.520px;-webkit-text-stroke:0.2px #5b7fe8">Workforce Analytics</div>
<div class="t" style="left:55.4px;top:145px;font-size:14.4px;color:#363b4a;letter-spacing:0.262px;-webkit-text-stroke:0.3px #363b4a">Dashboard</div>
<div class="t" style="left:55.1px;top:189.5px;font-size:14.4px;color:#363b4a;letter-spacing:0.480px;-webkit-text-stroke:0.3px #363b4a">Time Tracker</div>
<div class="t" style="left:55.4px;top:234px;font-size:14.4px;color:#363b4a;letter-spacing:0.564px;-webkit-text-stroke:0.3px #363b4a">Productivity</div>
<div class="t" style="left:55.1px;top:279px;font-size:14.4px;color:#363b4a;letter-spacing:0.703px;-webkit-text-stroke:0.3px #363b4a">Activity</div>
<div class="t" style="left:55.1px;top:323.5px;font-size:14.4px;color:#363b4a;letter-spacing:0.538px;-webkit-text-stroke:0.3px #363b4a">Analytics</div>
<div class="t" style="left:55.4px;top:368px;font-size:14.4px;color:#363b4a;letter-spacing:0.373px;-webkit-text-stroke:0.3px #363b4a">Recommendations</div>
<div class="t" style="left:55.4px;top:412.5px;font-size:14.4px;color:#363b4a;letter-spacing:0.414px;-webkit-text-stroke:0.3px #363b4a">Computers</div>
<div class="t" style="left:55.4px;top:457px;font-size:14.4px;color:#363b4a;letter-spacing:0.218px;-webkit-text-stroke:0.3px #363b4a">Reports</div>
<div class="t" style="left:55.6px;top:495px;font-size:13.4px;color:#4d78ec;letter-spacing:0.459px;-webkit-text-stroke:0.35px #4d78ec">Time &amp; Attendance</div>
<div class="t" style="left:55.3px;top:536px;font-size:13.4px;color:#3e4353;letter-spacing:0.468px;-webkit-text-stroke:0.15px #3e4353">Activity</div>
<div class="t" style="left:55.6px;top:576.5px;font-size:13.4px;color:#3e4353;letter-spacing:0.391px;-webkit-text-stroke:0.15px #3e4353">Suspicious Activity</div>
<div class="t" style="left:55.3px;top:617px;font-size:13.4px;color:#3e4353;letter-spacing:0.188px;-webkit-text-stroke:0.15px #3e4353">Attrition Risk</div>
<div class="t" style="left:55.3px;top:657.5px;font-size:13.4px;color:#3e4353;letter-spacing:0.256px;-webkit-text-stroke:0.15px #3e4353">Tool Usage</div>
<div class="t" style="left:55.6px;top:698px;font-size:13.4px;color:#3e4353;letter-spacing:0.056px;-webkit-text-stroke:0.15px #3e4353">ROI Optimization</div>
<div class="t" style="left:55.6px;top:738.5px;font-size:13.4px;color:#3e4353;letter-spacing:0.232px;-webkit-text-stroke:0.15px #3e4353">Schedules</div>
<div class="t" style="left:55.6px;top:784px;font-size:14.4px;color:#363b4a;letter-spacing:0.409px;-webkit-text-stroke:0.3px #363b4a">Integrations</div>
<div class="t" style="left:55.6px;top:828.5px;font-size:14.4px;color:#363b4a;letter-spacing:0.499px;-webkit-text-stroke:0.3px #363b4a">Hybrid Work</div>
<div class="t" style="left:55.6px;top:873px;font-size:14.4px;color:#363b4a;letter-spacing:0.551px;-webkit-text-stroke:0.3px #363b4a">Suspicious Activity</div>
<div class="t" style="left:55.6px;top:917.5px;font-size:14.4px;color:#363b4a;letter-spacing:0.300px;-webkit-text-stroke:0.3px #363b4a">Behaviors</div>
<div class="t" style="left:678.7px;top:21px;font-size:16.5px;color:#fff;letter-spacing:0.420px;-webkit-text-stroke:0.3px #fff">This is a demo account, and all the data provided is fictional. If everything is clear</div>
<div class="t" style="left:1330.5px;top:21px;font-size:16.5px;color:#fff;letter-spacing:0.355px;-webkit-text-stroke:0.3px #fff">Sign up</div>
<div class="t" style="left:1412.8px;top:21px;font-size:16.5px;color:#fff;letter-spacing:1.528px;-webkit-text-stroke:0.3px #fff">or</div>
<div class="t" style="left:1441.4px;top:21px;font-size:16.5px;color:#fff;letter-spacing:0.525px;-webkit-text-stroke:0.3px #fff">Contact us</div>
<div class="t" style="left:311.7px;top:79.9px;font-size:16.5px;color:#3b4152;letter-spacing:0.253px;-webkit-text-stroke:0.2px #3b4152">Reports</div>
<div class="t" style="left:412.6px;top:79.9px;font-size:16.5px;color:#3b4152;letter-spacing:0.424px;-webkit-text-stroke:0.2px #3b4152">Time &amp; Attendance</div>
<div class="t" style="left:599.8px;top:79.9px;font-size:16.5px;color:#3b4152;letter-spacing:0.359px;-webkit-text-stroke:0.2px #3b4152">Over Time Report</div>
<div class="t" style="left:1537.0px;top:80px;font-size:12.4px;color:#5580ee;letter-spacing:0.280px;-webkit-text-stroke:0.3px #5580ee">Set Work Location</div>
<div class="t" style="left:1741.8px;top:80px;font-size:12.4px;color:#5580ee;letter-spacing:0.458px;-webkit-text-stroke:0.3px #5580ee">Download Agent</div>
<div class="t" style="left:312.5px;top:159px;font-size:12.4px;color:#5b7fe8;letter-spacing:0.276px;-webkit-text-stroke:0.1px #5b7fe8">Organisation</div>
<div class="t" style="left:423.2px;top:159px;font-size:12.6px;color:#33373f;letter-spacing:0.564px;-webkit-text-stroke:0.35px #33373f">All Users</div>
<div class="t" style="left:1342.0px;top:159px;font-size:12.4px;color:#5b7fe8;letter-spacing:0.516px;-webkit-text-stroke:0.1px #5b7fe8">Month</div>
<div class="t" style="left:1512.9px;top:158.9px;font-size:14.8px;color:#3b4152;letter-spacing:0.245px;-webkit-text-stroke:0.1px #3b4152">March, 2026</div>
<div class="t" style="left:1688.3px;top:139.7px;font-size:10px;color:#686d7d;letter-spacing:0.239px">Time Format</div>
<div class="t" style="left:1688.3px;top:159px;font-size:13.2px;color:#3b4152;letter-spacing:0.033px;-webkit-text-stroke:0.15px #3b4152">Digital (09:08:35)</div>
<div class="t" style="left:1006.1px;top:210px;font-size:14.4px;color:#3b4152;letter-spacing:0.487px;-webkit-text-stroke:0.2px #3b4152">WT-Working Time</div>
<div class="t" style="left:1159.6px;top:210px;font-size:14.4px;color:#3b4152;letter-spacing:0.402px;-webkit-text-stroke:0.2px #3b4152">PT-Productive Time</div>
<div class="t" style="left:1324.6px;top:210px;font-size:14.4px;color:#3b4152;letter-spacing:0.393px;-webkit-text-stroke:0.2px #3b4152">NPT-Non Productive Time</div>
<div class="t" style="left:1532.2px;top:210px;font-size:14.4px;color:#3b4152;letter-spacing:0.431px;-webkit-text-stroke:0.2px #3b4152">NT-Neutral Time</div>
<div class="t" style="left:1675.7px;top:210px;font-size:14.4px;color:#3b4152;letter-spacing:0.457px;-webkit-text-stroke:0.2px #3b4152">IT-Idle Time</div>
<div class="t" style="left:1788.0px;top:210px;font-size:14.4px;color:#3b4152;letter-spacing:0.397px;-webkit-text-stroke:0.2px #3b4152">AT-Away Time</div>
<div class="t" style="left:324.6px;top:917.5px;font-size:14.4px;color:#686d7d;letter-spacing:0.267px;-webkit-text-stroke:0.15px #686d7d">Show</div>
<div class="t" style="left:383.8px;top:917.5px;font-size:13.2px;color:#3b4152;letter-spacing:-0.372px">30</div>
<div class="t" style="left:452.3px;top:917.5px;font-size:14.4px;color:#686d7d;letter-spacing:0.484px;-webkit-text-stroke:0.15px #686d7d">per page</div>
<div class="t" style="left:1502.5px;top:917.5px;font-size:14.4px;color:#686d7d;letter-spacing:0.289px;-webkit-text-stroke:0.15px #686d7d">1-30 of 100</div>
</div></body></html>
